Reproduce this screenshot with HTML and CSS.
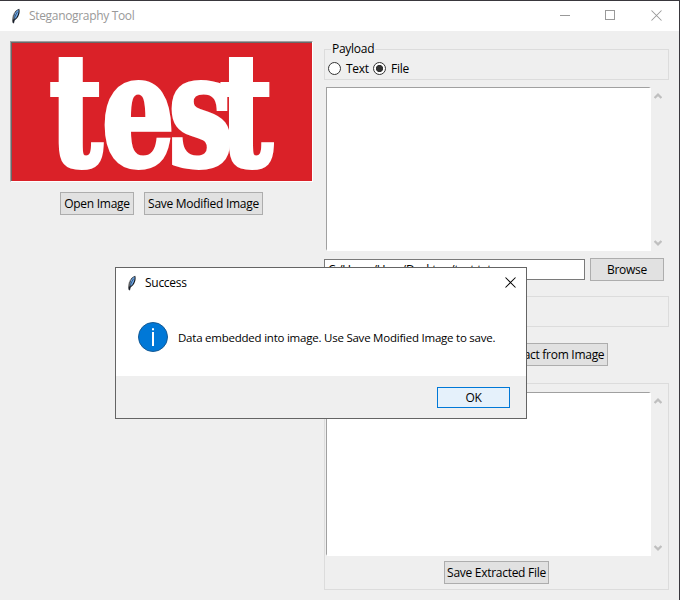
FILE: index.html
```html
<!DOCTYPE html>
<html lang="en">
<head>
<meta charset="utf-8">
<title>Steganography Tool</title>
<link rel="stylesheet" href="styles.css">
</head>
<body>
<svg class="defs" aria-hidden="true">
  <symbol id="feather" viewBox="0 0 10 16">
    <path d="M1.5 14.5C1 9 2.5 3 8.2 .8C9.5 4 8 10 3.5 12.5L2.6 15.5Z" fill="#16191e"/>
    <path d="M3 10.5C3 6.5 4.5 3.2 7.5 1.6C7.9 5.2 6.6 9 3.5 11.4Z" fill="#6fabec"/>
    <path d="M2.7 15.2C3 10.5 4.3 6.8 6.6 3.8" fill="none" stroke="#172438" stroke-width=".6"/>
    <path d="M2.1 11.5V7.5L4 4" fill="none" stroke="#b8b8b8" stroke-width=".8"/>
  </symbol>
  <symbol id="chevron" viewBox="0 0 8 6">
    <path d="M.6 5L4 1.6L7.4 5" fill="none" stroke="#bfbfbf" stroke-width="2.2"/>
  </symbol>
  <symbol id="cross" viewBox="0 0 11 11">
    <path d="M.5 .5L10.5 10.5M10.5 .5L.5 10.5" fill="none" stroke="currentColor" stroke-width="1.05"/>
  </symbol>
</svg>
<div class="window">
  <header class="titlebar">
    <svg class="feather"><use href="#feather"/></svg>
    <span class="title">Steganography Tool</span>
    <div class="controls">
      <svg class="control" viewBox="0 0 11 11"><path d="M0 5.5H10" stroke="currentColor"/></svg>
      <svg class="control maximize" viewBox="0 0 11 11"><rect x=".5" y=".5" width="9" height="9" fill="none" stroke="currentColor"/></svg>
      <svg class="control"><use href="#cross"/></svg>
    </div>
  </header>
  <main class="client">
    <section class="left">
      <div class="preview">
        <svg class="picture" viewBox="0 0 300 138">
          <text class="picture-word" transform="scale(.74 1)" x="51 122 212 281" y="122">test</text>
        </svg>
      </div>
      <div class="image-actions">
        <button class="btn open">Open Image</button>
        <button class="btn save">Save Modified Image</button>
      </div>
    </section>
    <section class="right">
      <div class="group payload">
        <span class="legend">Payload</span>
        <label class="choice"><span class="radio"></span><span class="text-label">Text</span></label>
        <label class="choice"><span class="radio on"></span><span>File</span></label>
      </div>
      <div class="editor">
        <div class="textarea"></div>
        <div class="scroll"><svg class="chev"><use href="#chevron"/></svg><svg class="chev down"><use href="#chevron"/></svg></div>
      </div>
      <div class="file-row">
        <div class="entry"><span>C:/Users/User/Desktop/test.txt</span></div>
        <button class="btn browse">Browse</button>
      </div>
      <div class="group password"></div>
      <div class="extract-row"><button class="btn extract">Extract from Image</button></div>
      <div class="group output">
        <div class="editor">
          <div class="textarea"></div>
          <div class="scroll"><svg class="chev"><use href="#chevron"/></svg><svg class="chev down"><use href="#chevron"/></svg></div>
        </div>
        <button class="btn save-file">Save Extracted File</button>
      </div>
    </section>
  </main>
</div>
<div class="dialog" role="dialog">
  <header class="dialog-bar">
    <svg class="feather"><use href="#feather"/></svg>
    <span class="dialog-title">Success</span>
    <svg class="dialog-close"><use href="#cross"/></svg>
  </header>
  <div class="dialog-body">
    <svg class="info" viewBox="0 0 30 30"><circle cx="15" cy="15" r="14.5" fill="#0078d7" stroke="#155a94"/><path d="M14 6.3h2v2h-2zM14 10h2v14h-2z" fill="#fff"/></svg>
    <span class="message">Data embedded into image. Use Save Modified Image to save.</span>
  </div>
  <footer class="dialog-foot"><button class="btn ok">OK</button></footer>
</div>
</body>
</html>
```
FILE: styles.css
```css
* { box-sizing: border-box; }
body {
  margin: 0;
  width: 680px;
  height: 600px;
  overflow: hidden;
  background: #39373d;
  color: #000;
  font: 12px/16px "Open Sans", "Noto Sans", sans-serif;
  letter-spacing: -0.28px;
  white-space: nowrap;
}
svg { display: block; }
.defs { position: absolute; width: 0; height: 0; }
.window { width: 679px; height: 600px; padding-top: 1px; }
.titlebar {
  display: flex;
  align-items: center;
  height: 30px;
  padding: 0 17px 0 11px;
  background: #fff;
  color: #999;
}
.feather { width: 10px; height: 16px; }
.title { margin-left: 8px; letter-spacing: -0.33px; }
.controls { display: flex; gap: 34px; margin: -1px 0 0 auto; }
.control { width: 11px; height: 11px; }
.maximize { margin-right: 1px; }
.client {
  display: flex;
  height: 569px;
  padding: 10px 10px 0;
  background: #efefef;
}
.left { width: 303px; margin-right: 11px; }
.preview {
  width: 303px;
  height: 141px;
  border: 1px solid;
  border-color: #a0a0a0 #fff #fff #a0a0a0;
  background: #da2128;
  box-shadow: inset 1px 1px #696969;
}
.picture { width: 300px; height: 138px; margin: 1px 0 0 1px; }
.picture-word {
  font: bold 153px/1 "DejaVu Serif", serif;
  letter-spacing: 0;
  fill: #fff;
  stroke: #fff;
  stroke-width: 6px;
}
.image-actions { display: flex; gap: 10px; margin: 10px 0 0 50px; }
.btn {
  height: 23px;
  padding: 0;
  border: 1px solid #adadad;
  border-radius: 0;
  background: #e1e1e1;
  color: #000;
  font: inherit;
  letter-spacing: inherit;
  text-align: center;
}
.open { width: 74px; }
.save { width: 119px; }
.right { width: 345px; padding-top: 8px; }
.group { border: 1px solid #dcdcdc; }
.payload {
  position: relative;
  display: flex;
  align-items: center;
  height: 31px;
  padding: 8px 0 0 3px;
}
.legend {
  position: absolute;
  left: 6px;
  top: -9px;
  padding: 0 1px;
  background: #efefef;
}
.choice { display: flex; align-items: center; gap: 5px; }
.text-label { width: 27px; }
.radio {
  width: 13px;
  height: 13px;
  border: 1px solid #333;
  border-radius: 50%;
  background: #fff;
}
.radio.on { background: radial-gradient(circle, #333 3.2px, #fff 4px); }
.editor { display: flex; height: 164px; margin: 7px 0 0 2px; }
.textarea {
  width: 325px;
  border: solid;
  border-width: 1px 2px 2px 1px;
  border-color: #a0a0a0 #fff #fff #a0a0a0;
  background: #fff;
}
.scroll {
  display: flex;
  flex-direction: column;
  justify-content: space-between;
  padding: 6px 0 5px 3px;
}
.chev { width: 8px; height: 6px; }
.down { transform: scaleY(-1); }
.file-row { display: flex; align-items: center; gap: 5px; margin-top: 7px; }
.entry {
  width: 261px;
  height: 21px;
  padding: 2px 3px;
  border: 1px solid #7a7a7a;
  background: #fff;
}
.browse { width: 74px; }
.password { height: 31px; margin-top: 15px; }
.extract-row { display: flex; height: 23px; margin-top: 16px; padding-left: 177px; }
.extract { width: 107px; padding-right: 2px; }
.output { height: 207px; margin-top: 17px; padding-top: 8px; }
.output .editor { margin: 0 0 5px 1px; }
.save-file { display: block; width: 105px; margin-left: 119px; }
.dialog {
  position: absolute;
  left: 115px;
  top: 267px;
  width: 412px;
  height: 152px;
  border: 1px solid #646464;
  background: #fff;
}
.dialog-bar {
  display: flex;
  align-items: center;
  height: 29px;
  padding: 0 10px 0 11px;
}
.dialog-title { margin-left: 8px; }
.dialog-close { width: 11px; height: 11px; margin-left: auto; }
.dialog-body { display: flex; align-items: center; gap: 10px; height: 79px; padding: 1px 0 0 22px; }
.info { width: 30px; height: 30px; margin-bottom: 1px; }
.message { padding-top: 1px; font-size: 11.5px; letter-spacing: -0.23px; }
.dialog-foot {
  display: flex;
  justify-content: flex-end;
  height: 42px;
  padding: 11px 16px 0 0;
  background: #efefef;
}
.ok { width: 73px; height: 21px; border-color: #0078d7; background: #e5f1fb; }
```
